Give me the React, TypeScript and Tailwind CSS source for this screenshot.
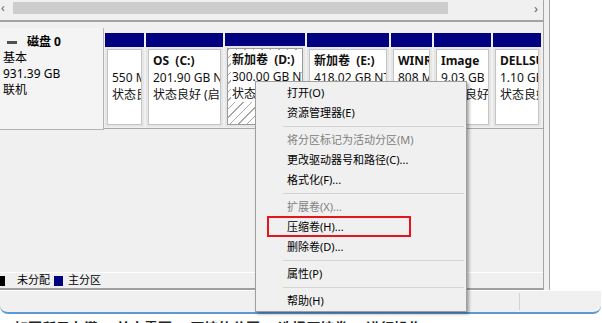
import React from 'react'

const partitions = [
  { w: 'w-[39px]', name: '', size: '550 MB', status: '状态良好 (EFI 系统分区)' },
  { w: 'w-[77px]', name: 'OS  (C:)', size: '201.90 GB NTFS', status: '状态良好 (启动, 页面文件, 故障转储, 主分区)' },
  { w: 'w-[80px]', name: '新加卷  (D:)', size: '300.00 GB NTFS', status: '状态良好 (主分区)', selected: true },
  { w: 'w-[82px]', name: '新加卷  (E:)', size: '418.02 GB NTFS', status: '状态良好 (主分区)' },
  { w: 'w-[41px]', name: 'WINRETOOLS', size: '808 MB NTFS', status: '状态良好 (OEM 分区)' },
  { w: 'w-[57px]', name: 'Image', size: '9.03 GB NTFS', status: '状态良好 (OEM 分区)' },
  { w: 'w-[48px]', name: 'DELLSUPPORT', size: '1.10 GB NTFS', status: '状态良好 (OEM 分区)' },
]

type MenuEntry = { label?: string; disabled?: boolean; boxed?: boolean; sep?: boolean }

const menu: MenuEntry[] = [
  { label: '打开(O)' },
  { label: '资源管理器(E)' },
  { sep: true },
  { label: '将分区标记为活动分区(M)', disabled: true },
  { label: '更改驱动器号和路径(C)...' },
  { label: '格式化(F)...' },
  { sep: true },
  { label: '扩展卷(X)...', disabled: true },
  { label: '压缩卷(H)...', boxed: true },
  { label: '删除卷(D)...' },
  { sep: true },
  { label: '属性(P)' },
  { sep: true },
  { label: '帮助(H)' },
]

export default function App() {
  return (
    <div className="relative h-[323px] w-[602px] overflow-hidden bg-white font-['Noto_Sans','Noto_Sans_CJK_SC',sans-serif] text-[12px] text-black">
      <div className="flex h-[290px]">
        <div className="w-[550px] border-r border-[#a6a6a6] bg-[#f0f0f0]">
          <div className="flex h-full w-[544px] flex-col border-r border-[#a6a6a6]">
            <ScrollBar />
            <div className="mt-[4px] h-[2px] bg-[#a3a3a3]" />
            <DiskRow />
            <div className="flex-1" />
            <Legend />
          </div>
        </div>
      </div>
      <StatusBar />
      <Caption />
      <ContextMenu />
    </div>
  )
}

function ScrollBar() {
  return (
    <div className="flex h-[16px] items-center">
      <div className="flex w-[13px] items-center pl-[1px] text-[12px] leading-none text-[#606060]">‹</div>
      <div className="h-[12px] w-[435px] bg-[#cdcdcd]" />
      <div className="flex flex-1 justify-end pr-[5px] text-[13px] leading-none text-[#606060]">›</div>
    </div>
  )
}

function DiskRow() {
  return (
    <div className="mt-[6px] flex h-[102px]">
      <div className="w-[104px] border-r border-b border-[#b4b4b4] bg-[#f4f4f4] pt-[6px] pl-[3px] leading-[16px]">
        <div className="flex items-center">
          <div className="ml-[4px] h-[3px] w-[10px] bg-[#505050]" />
          <span className="ml-[10px] font-bold">磁盘 0</span>
        </div>
        <div>基本</div>
        <div>931.39 GB</div>
        <div>联机</div>
      </div>
      <div className="h-[101px] flex-1 self-start border-b border-[#a8a8a8] pt-[5px] pl-[1px]">
        <div className="flex h-[94px] gap-[2px]">
          {partitions.map((p, i) => (
            <Partition key={i} {...p} />
          ))}
        </div>
      </div>
    </div>
  )
}

function PartText({ name, size, status }: { name: string; size: string; status: string }) {
  return (
    <>
      <div className="h-[17px] font-bold whitespace-pre">{name}</div>
      <div>{size}</div>
      <div>{status}</div>
    </>
  )
}

function Partition({ w, name, size, status, selected }: { w: string; name: string; size: string; status: string; selected?: boolean }) {
  return (
    <div className={`${w} flex flex-col`}>
      <div className="h-[14px] bg-[#000080]" />
      <div className="flex-1 bg-[#e6e6e6] p-[2px]">
        {selected ? (
          <div className="h-full border border-[#9a9a9a] bg-[repeating-linear-gradient(135deg,#a8a8a8_0px,#a8a8a8_1px,#ffffff_1px,#ffffff_6px)] pt-[1px] pb-[22px] pl-[3px]">
            <div className="h-full overflow-hidden bg-white pt-[1px] pl-[1px] leading-[17px] whitespace-nowrap text-[#111]">
              <PartText name={name} size={size} status={status} />
            </div>
          </div>
        ) : (
          <div className="h-full overflow-hidden border border-[#c4c4c4] bg-white pt-[2px] pl-[4px] leading-[17px] whitespace-nowrap text-[#111]">
            <PartText name={name} size={size} status={status} />
          </div>
        )}
      </div>
    </div>
  )
}

function Legend() {
  return (
    <div className="flex h-[18px] items-center border-t border-white border-b-2 border-b-[#a0a0a0] text-[11px]">
      <div className="h-[10px] w-[5px] bg-black" />
      <span className="ml-[12px]">未分配</span>
      <div className="ml-[4px] h-[10px] w-[9px] bg-[#000080]" />
      <span className="ml-[5px]">主分区</span>
    </div>
  )
}

function StatusBar() {
  return (
    <div className="flex h-[24px] w-[601px] rounded-b-[8px] border-t border-white border-b-2 border-b-[#5b9bd5] bg-[#f0f0f0] py-[2px]">
      <div className="w-[520px] border-r border-[#d2d2d2]" />
    </div>
  )
}

function Caption() {
  return (
    <div className="h-[9px] overflow-hidden">
      <div className="mt-[6px] flex gap-[18px] pl-[14px] text-[14px] leading-[16px] font-bold text-[#222]">
        <span>如图所示右键</span>
        <span>单击需要</span>
        <span>压缩的分区</span>
        <span>选择压缩卷</span>
        <span>进行操作</span>
      </div>
    </div>
  )
}

function ContextMenu() {
  return (
    <div className="absolute top-[81px] left-[255px] h-[231px] w-[212px] border border-[#9e9e9e] bg-[#f0f0f0] pt-[1px] text-[11px] shadow-[2px_2px_3px_rgba(0,0,0,0.35)]">
      {menu.map((m, i) =>
        m.sep ? (
          <div key={i} className="h-[7px] pt-[3px] pr-[2px] pl-[27px]">
            <div className="h-px bg-[#d4d4d4]" />
          </div>
        ) : (
          <div key={i} className={`relative flex h-[20px] items-center pl-[31px] ${m.disabled ? 'text-[#808080]' : 'text-black'}`}>
            {m.label}
            {m.boxed && <div className="absolute top-[-1px] left-[11px] h-[21px] w-[144px] border-2 border-[#e8141c]" />}
          </div>
        ),
      )}
    </div>
  )
}
